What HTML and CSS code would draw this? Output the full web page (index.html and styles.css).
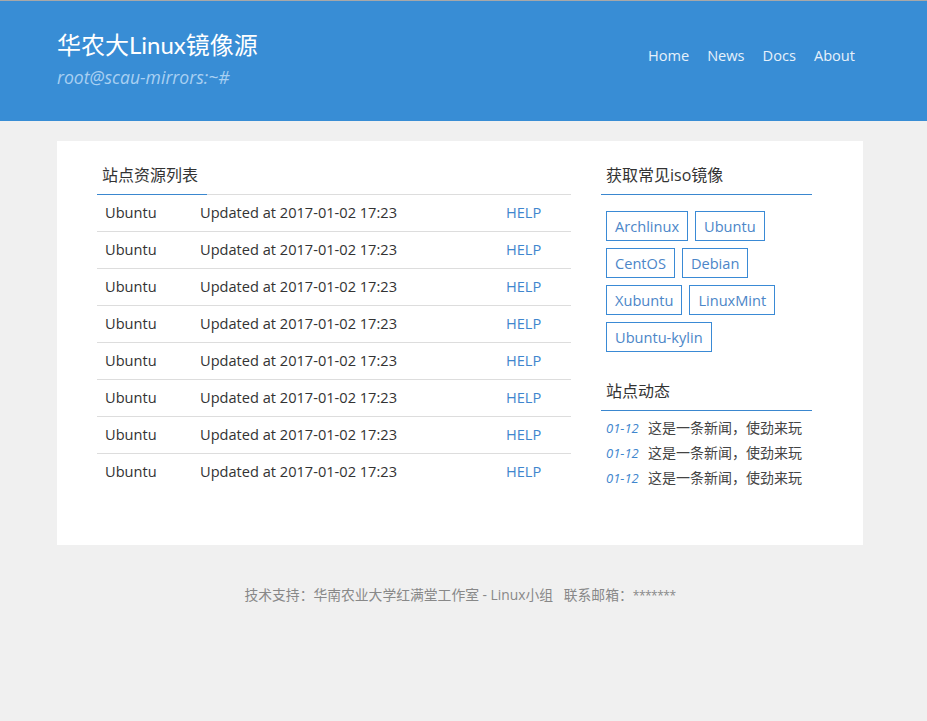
FILE: index.html
```html
<!DOCTYPE html>
<html lang="zh-CN">
<head>
<meta charset="utf-8">
<title>华农大Linux镜像源</title>
<link rel="stylesheet" href="styles.css">
</head>
<body>
<header class="header">
  <div class="header-inner">
    <div class="brand">
      <h1 class="title">华农大Linux镜像源</h1>
      <p class="subtitle">root@scau-mirrors:~#</p>
    </div>
    <nav class="nav">
      <a href="#">Home</a>
      <a href="#">News</a>
      <a href="#">Docs</a>
      <a href="#">About</a>
    </nav>
  </div>
</header>
<main class="card">
  <section class="list">
    <div class="list-head"><h2 class="tab">站点资源列表</h2></div>
    <div class="row"><span class="c-name">Ubuntu</span><span class="c-time">Updated at 2017-01-02 17:23</span><a class="c-help" href="#">HELP</a></div>
    <div class="row"><span class="c-name">Ubuntu</span><span class="c-time">Updated at 2017-01-02 17:23</span><a class="c-help" href="#">HELP</a></div>
    <div class="row"><span class="c-name">Ubuntu</span><span class="c-time">Updated at 2017-01-02 17:23</span><a class="c-help" href="#">HELP</a></div>
    <div class="row"><span class="c-name">Ubuntu</span><span class="c-time">Updated at 2017-01-02 17:23</span><a class="c-help" href="#">HELP</a></div>
    <div class="row"><span class="c-name">Ubuntu</span><span class="c-time">Updated at 2017-01-02 17:23</span><a class="c-help" href="#">HELP</a></div>
    <div class="row"><span class="c-name">Ubuntu</span><span class="c-time">Updated at 2017-01-02 17:23</span><a class="c-help" href="#">HELP</a></div>
    <div class="row"><span class="c-name">Ubuntu</span><span class="c-time">Updated at 2017-01-02 17:23</span><a class="c-help" href="#">HELP</a></div>
    <div class="row last"><span class="c-name">Ubuntu</span><span class="c-time">Updated at 2017-01-02 17:23</span><a class="c-help" href="#">HELP</a></div>
  </section>
  <aside class="side">
    <h2 class="side-head">获取常见iso镜像</h2>
    <div class="tags">
      <a class="tag" href="#">Archlinux</a>
      <a class="tag" href="#">Ubuntu</a>
      <a class="tag" href="#">CentOS</a>
      <a class="tag" href="#">Debian</a>
      <a class="tag" href="#">Xubuntu</a>
      <a class="tag" href="#">LinuxMint</a>
      <a class="tag" href="#">Ubuntu-kylin</a>
    </div>
    <h2 class="side-head news-head">站点动态</h2>
    <ul class="news">
      <li><em>01-12</em><span>这是一条新闻，使劲来玩</span></li>
      <li><em>01-12</em><span>这是一条新闻，使劲来玩</span></li>
      <li><em>01-12</em><span>这是一条新闻，使劲来玩</span></li>
    </ul>
  </aside>
</main>
<footer class="footer">技术支持：华南农业大学红满堂工作室 - Linux小组&nbsp;&nbsp;&nbsp;联系邮箱：<span class="stars">*******</span></footer>
</body>
</html>
```
FILE: styles.css
```css
* { box-sizing: border-box; }
html, body { margin: 0; padding: 0; }
body {
  background: #f0f0f0;
  font-family: "Open Sans", "Noto Sans CJK SC", sans-serif;
  color: #333;
  border-top: 1px solid #a8a8a8;
}
a { text-decoration: none; }
.header { background: #388dd5; height: 120px; }
.header-inner {
  width: 806px;
  margin-left: 57px;
  display: flex;
  justify-content: space-between;
  align-items: flex-start;
}
.title {
  margin: 27px 0 0;
  font-family: "Lato", "Noto Sans CJK SC", sans-serif;
  font-size: 24px;
  font-weight: normal;
  line-height: 34px;
  color: #fff;
}
.subtitle {
  margin: 3px 0 0;
  font-size: 17.6px;
  font-style: italic;
  line-height: 24px;
  color: #a9d0f2;
}
.nav {
  margin-top: 43px;
  margin-right: 8px;
  display: flex;
  gap: 18px;
}
.nav a { color: #e6f1fb; font-size: 14.6px; line-height: 22px; }
.card {
  width: 806px;
  margin: 20px 0 0 57px;
  background: #fff;
  padding: 22px 51px 0 40px;
  height: 404px;
  display: flex;
  gap: 30px;
}
.list { width: 474px; }
.list-head { border-bottom: 1px solid #ddd; }
.tab {
  display: inline-block;
  margin: 0;
  padding: 0 5px 7px;
  width: 110px;
  font-size: 16px;
  font-weight: normal;
  line-height: 24px;
  border-bottom: 1px solid #3a87cf;
  margin-bottom: -1px;
  color: #333;
}
.row {
  display: flex;
  height: 37px;
  align-items: center;
  border-bottom: 1px solid #ddd;
  font-size: 14.6px;
  color: #333;
  padding-bottom: 2px;
}
.row.last { border-bottom-color: transparent; }
.c-name { width: 103px; padding-left: 8px; }
.c-time { width: 306px; }
.c-help { color: #3f86ce; }
.side { width: 211px; }
.side-head {
  margin: 0;
  padding: 0 5px 7px;
  font-size: 16px;
  font-weight: normal;
  line-height: 24px;
  border-bottom: 1px solid #3a87cf;
  color: #333;
}
.tags {
  display: flex;
  flex-wrap: wrap;
  gap: 7px 7px;
  padding: 16px 0 0 5px;
}
.tag {
  display: block;
  height: 30px;
  line-height: 28px;
  padding: 0 8px;
  border: 1px solid #3a8ad5;
  color: #4c86c8;
  font-size: 14.6px;
}
.news-head { margin-top: 27px; }
.news {
  list-style: none;
  margin: 0;
  padding: 4px 0 0 5px;
}
.news li { display: flex; align-items: center; height: 25px; font-size: 14px; line-height: 20px; color: #444; white-space: nowrap; }
.news em { color: #3f86ce; font-size: 13px; width: 42px; }
.footer {
  text-align: center;
  color: #888;
  font-size: 13.8px;
  margin: 40px 0 0;
  width: 920px;
  line-height: 20px;
}
.stars { font-size: 12px; letter-spacing: -0.5px; }
```
